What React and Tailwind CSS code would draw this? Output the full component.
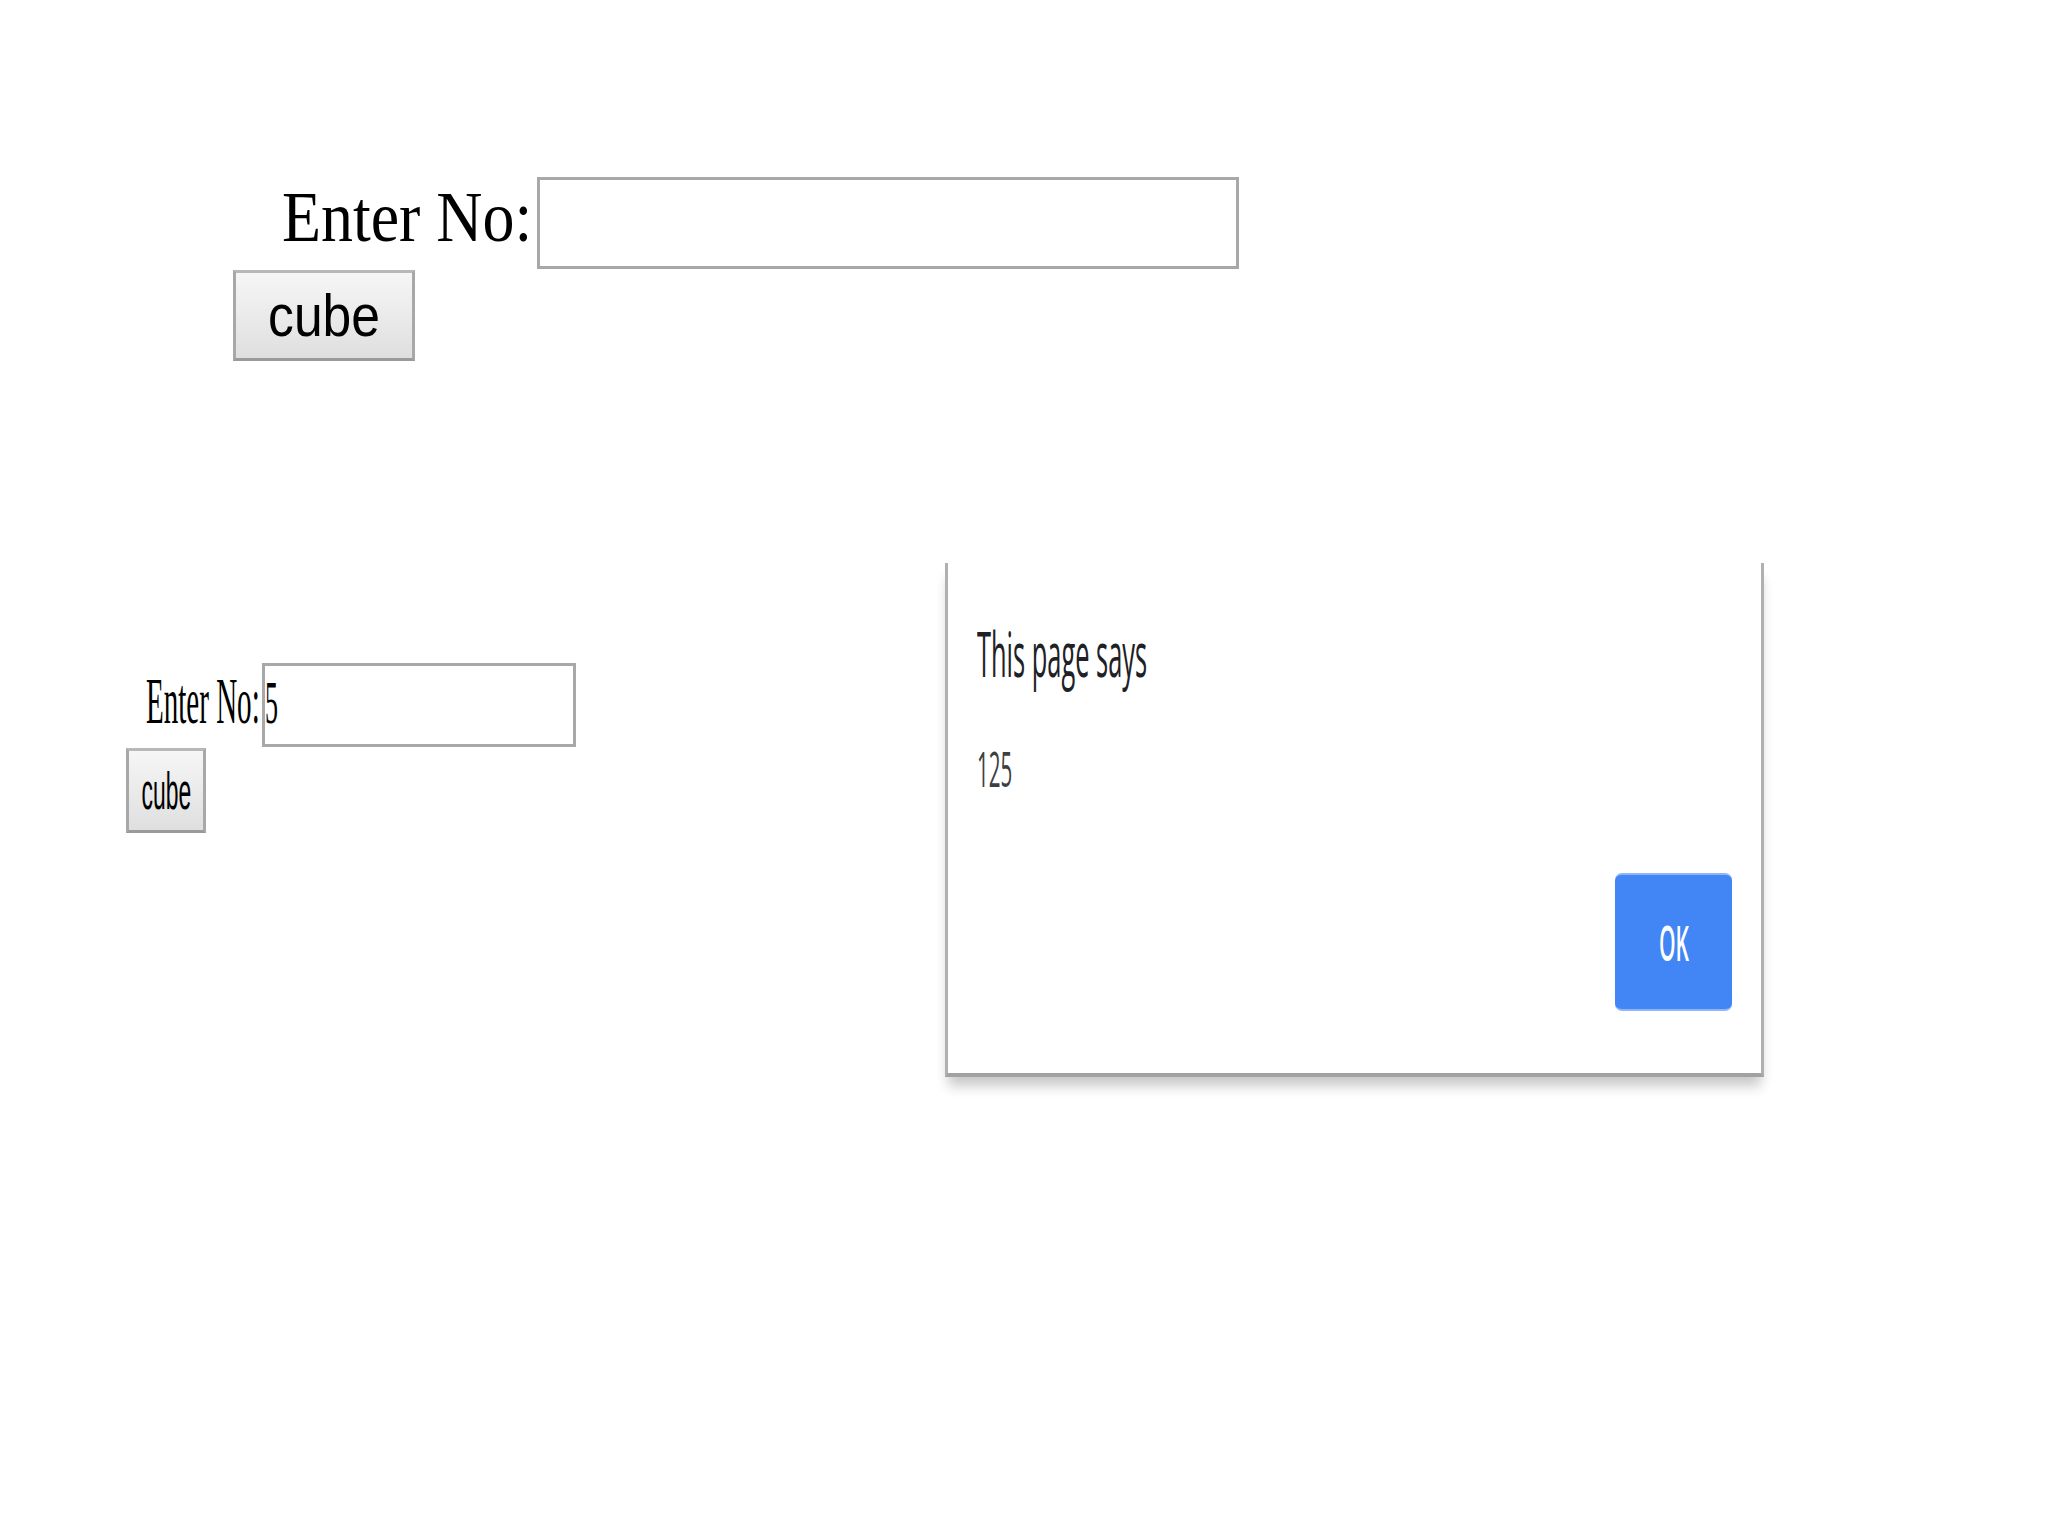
/* Two "cube" forms side by side with a browser alert showing the result.
   The source screenshot is squeezed sideways, so text is narrowed with scale-x. */

function Squeeze({ box, scale, children }) {
  // outer span keeps the layout width, inner span carries the narrowed glyphs
  return (
    <span className={`inline-block shrink-0 whitespace-nowrap leading-none ${box}`}>
      <span className={`inline-block origin-left leading-none ${scale}`}>{children}</span>
    </span>
  );
}

function CubeButton({ size, children }) {
  return (
    <button
      type="button"
      className={`flex items-center justify-center overflow-visible border-[3px] border-t-[#b8b8b8] border-x-[#a8a8a8] border-b-[#9a9a9a] bg-gradient-to-b from-[#f6f6f6] to-[#dfdfdf] font-['Liberation_Sans',Arial,sans-serif] leading-none text-black ${size}`}
    >
      {children}
    </button>
  );
}

export default function App() {
  return (
    <div className="min-h-screen w-full bg-white font-['Liberation_Serif','Times_New_Roman',serif] text-black">
      {/* large form */}
      <section className="pl-[233px] pt-[177px]">
        <div className="flex items-start">
          <Squeeze box="ml-[49px] mt-[5px] w-[255px] text-[71px]" scale="scale-x-[0.9]">
            Enter No:
          </Squeeze>
          <div className="h-[92px] w-[702px] border-[3px] border-[#a8a8a8] bg-white" />
        </div>
        <div className="mt-px">
          <CubeButton size="h-[91px] w-[182px] text-[60px]">
            <span className="inline-block origin-center scale-x-[0.86] leading-none">cube</span>
          </CubeButton>
        </div>
      </section>

      {/* small form + alert */}
      <section className="mt-[202px] flex items-start">
        <div className="w-[945px] shrink-0 pl-[126px] pt-[100px]">
          <div className="flex items-start">
            <Squeeze box="ml-[20px] mt-[5px] w-[116px] text-[66px]" scale="scale-x-[0.44]">
              Enter No:
            </Squeeze>
            <div className="flex h-[84px] w-[314px] items-start border-[3px] border-[#a8a8a8] bg-white pt-[5px]">
              <Squeeze box="w-[14px] text-[62px]" scale="scale-x-[0.42]">
                5
              </Squeeze>
            </div>
          </div>
          <div className="mt-px">
            <CubeButton size="h-[85px] w-[80px] text-[52px]">
              <span className="inline-block origin-center scale-x-[0.44] leading-none">cube</span>
            </CubeButton>
          </div>
        </div>

        <div className="flex w-[819px] shrink-0 flex-col border-x-[3px] border-b-4 border-t-0 border-x-[#b0b0b0] border-b-[#a2a2a2] bg-white px-[29px] pb-[62px] pt-[59px] font-['Open_Sans','Noto_Sans',sans-serif] shadow-[0_12px_12px_-3px_rgba(0,0,0,0.22)]">
          <Squeeze box="w-[180px] text-[62px] text-[#202124]" scale="scale-x-[0.41]">
            This page says
          </Squeeze>
          <Squeeze box="mt-[60px] w-[40px] text-[49px] text-[#3c4043]" scale="scale-x-[0.42]">
            125
          </Squeeze>
          <button
            type="button"
            className="mt-[80px] flex h-[138px] w-[117px] items-center justify-center self-end rounded-[7px] border-y-2 border-y-[#8fb5f8] bg-[#4285f4] text-[49px] font-semibold leading-none text-white"
          >
            <span className="inline-block origin-center scale-x-[0.43] leading-none">OK</span>
          </button>
        </div>
      </section>
    </div>
  );
}
